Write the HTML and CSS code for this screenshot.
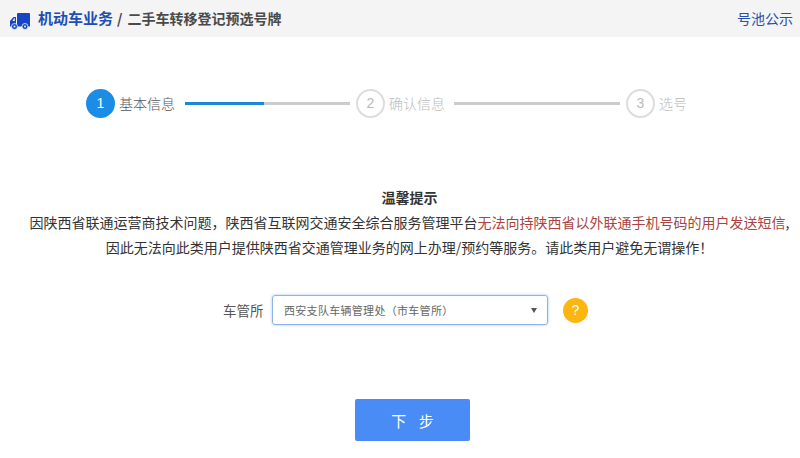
FILE: index.html
```html
<!DOCTYPE html>
<html lang="zh">
<head>
<meta charset="utf-8">
<title>二手车转移登记预选号牌</title>
<link rel="stylesheet" href="styles.css">
</head>
<body>
<header class="topbar">
  <div class="crumbs">
    <svg class="truck" viewBox="0 0 20 17" width="20" height="17" aria-hidden="true"><path fill="#1746c4" d="M7 1a1 1 0 0 1 1-1h11a1 1 0 0 1 1 1v12.500H7z"/><path fill="#1746c4" fill-rule="evenodd" d="M3.500 4H6v9.500H0V8zM2.600 8h2.200V5.300H4z"/><circle cx="4.500" cy="13.500" r="3" fill="#1746c4" stroke="#f4f4f4" stroke-width=".8"/><circle cx="4.500" cy="13.500" r="1" fill="#f4f4f4"/><circle cx="15" cy="13.500" r="3" fill="#1746c4" stroke="#f4f4f4" stroke-width=".8"/><circle cx="15" cy="13.500" r="1" fill="#f4f4f4"/></svg>
    <a class="crumb-link">机动车业务</a>
    <span class="crumb-sep">/</span>
    <span class="crumb-page">二手车转移登记预选号牌</span>
  </div>
  <a class="pool-link">号池公示</a>
</header>

<ol class="steps">
  <li class="step step-active"><span class="dot">1</span><span class="label">基本信息</span></li>
  <li class="bar bar-first"><span class="bar-fill"></span></li>
  <li class="step"><span class="dot">2</span><span class="label">确认信息</span></li>
  <li class="bar bar-second"></li>
  <li class="step"><span class="dot">3</span><span class="label">选号</span></li>
</ol>

<section class="notice">
  <h2 class="notice-title">温馨提示</h2>
  <p class="notice-line">因陕西省联通运营商技术问题，陕西省互联网交通安全综合服务管理平台<span class="warn">无法向持陕西省以外联通手机号码的用户发送短信</span>,</p>
  <p class="notice-line">因此无法向此类用户提供陕西省交通管理业务的网上办理/预约等服务。请此类用户避免无谓操作！</p>
</section>

<form class="form-row">
  <label class="field-label" for="office">车管所</label>
  <div class="select-box" id="office">
    <span>西安支队车辆管理处（市车管所）</span>
    <i class="caret"></i>
  </div>
  <span class="help">?</span>
</form>

<div class="actions"><button class="next" type="button">下 步</button></div>
</body>
</html>
```
FILE: styles.css
```css
* { box-sizing: border-box; }
html, body { margin: 0; padding: 0; }
body {
  width: 800px;
  height: 458px;
  overflow: hidden;
  background: #fff;
  font-family: "Noto Sans CJK SC", "Liberation Sans", sans-serif;
  color: #333;
  text-spacing-trim: space-all;
}
.topbar {
  height: 37px;
  background: #f4f4f4;
  display: flex;
  align-items: center;
  justify-content: space-between;
  padding: 0 7px 2px 10px;
}
.crumbs { display: flex; align-items: center; }
.truck { margin-right: 8px; margin-top: 7px; }
.crumb-link { font-size: 15px; font-weight: 700; color: #1f4fb4; }
.crumb-sep { font-size: 14px; font-weight: 700; color: #444; margin: 0 5px 0 4px; }
.crumb-page { font-size: 14px; font-weight: 700; color: #4a4a4a; }
.pool-link { font-size: 14px; color: #2a4fa8; }

.steps {
  list-style: none;
  margin: 0;
  padding: 0 0 0 86px;
  height: 132px;
  display: flex;
  align-items: center;
}
.step { display: flex; align-items: center; }
.dot {
  width: 29px;
  height: 29px;
  border-radius: 50%;
  border: 2px solid #ddd;
  color: #bbb;
  font-size: 14px;
  display: flex;
  align-items: center;
  justify-content: center;
  font-family: "Liberation Sans", sans-serif;
}
.label { font-size: 14px; font-weight: 300; color: #bbb; margin-left: 4px; }
.step-active .dot { background: #1c8de6; border-color: #1c8de6; color: #fff; }
.step-active .label { color: #555; }
.bar { height: 3px; background: #ccc; }
.bar-first { width: 165px; margin: 0 6px 0 10px; }
.bar-fill { display: block; width: 79px; height: 3px; background: #1c87d8; }
.bar-second { width: 166px; margin: 0 6px 0 9px; }

.notice { margin-top: 18px; padding-left: 19px; text-align: center; }
.notice-title { margin: 0; padding-bottom: 3px; font-size: 14px; line-height: 20px; font-weight: 700; color: #333; }
.notice-line { margin: 0; font-size: 14px; line-height: 25px; color: #333; }
.warn { color: #a94442; }

.form-row {
  margin-top: 35px;
  margin-left: 223px;
  display: flex;
  align-items: center;
}
.field-label { width: 49px; font-size: 13.500px; color: #555; }
.select-box {
  width: 276px;
  height: 30px;
  border: 1px solid #8cb2e6;
  border-radius: 3px;
  box-shadow: 0 0 3px rgba(102, 160, 235, .6);
  padding: 0 10px 0 11px;
  display: flex;
  align-items: center;
  justify-content: space-between;
  font-size: 11px;
  letter-spacing: .3px;
  color: #666;
}
.caret {
  width: 0;
  height: 0;
  border-left: 3px solid transparent;
  border-right: 3px solid transparent;
  border-top: 5px solid #555;
}
.help {
  width: 25px;
  height: 25px;
  margin-left: 15px;
  border-radius: 50%;
  background: #fdb50f;
  color: #fff;
  font-size: 14px;
  display: flex;
  align-items: center;
  justify-content: center;
  font-family: "Liberation Sans", sans-serif;
}

.actions { margin-top: 74px; margin-left: 355px; }
.next {
  width: 115px;
  height: 42px;
  border: 0;
  border-radius: 2px;
  background: #4a8cf5;
  color: #fff;
  font-family: inherit;
  font-size: 15px;
  word-spacing: 9px;
  padding: 0;
}
```
